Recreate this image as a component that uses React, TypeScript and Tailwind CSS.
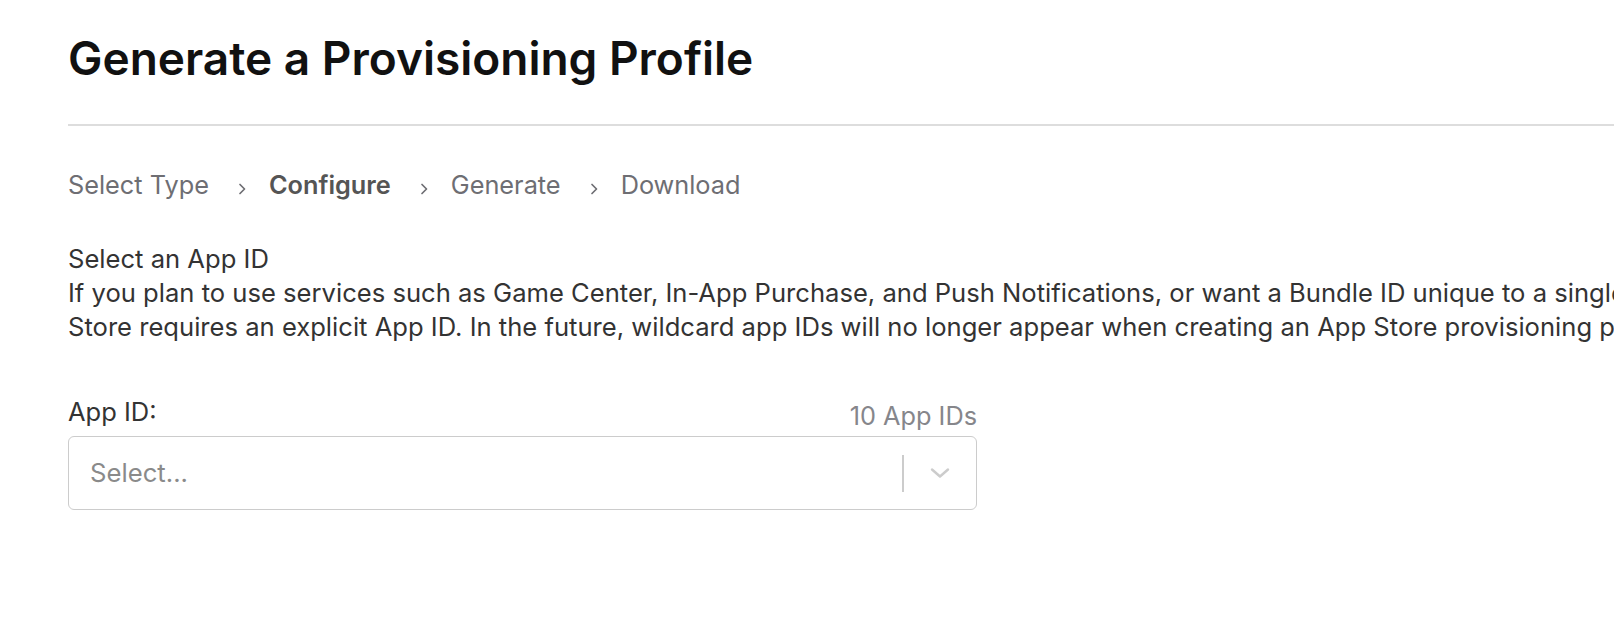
import React from "react";

function Chevron() {
  return (
    <svg width="10" height="14" viewBox="0 0 10 14" className="ml-[28px] mr-[22px] mt-[8px]" fill="none">
      <path d="M3 2.5 L7.5 7 L3 11.5" stroke="#6e6e73" strokeWidth="1.7" strokeLinecap="round" strokeLinejoin="round" />
    </svg>
  );
}

export default function App() {
  return (
    <div className="w-[1614px] h-[624px] overflow-hidden bg-white" style={{ fontFamily: "Inter, 'Noto Sans', sans-serif" }}>
      <div className="pl-[68px] w-[2200px]">
        <h1 className="pt-[28px] text-[46px] leading-[60px] font-semibold text-[#111111]">
          Generate a Provisioning Profile
        </h1>
        <div className="mt-[36px] h-[2px] bg-[#dddddd]" />
        <div className="mt-[44px] flex items-center text-[25.3px] leading-[30px] text-[#6e6e73]">
          <span>Select Type</span>
          <Chevron />
          <span className="font-semibold text-[#555555]">Configure</span>
          <Chevron />
          <span>Generate</span>
          <Chevron />
          <span>Download</span>
        </div>
        <div className="mt-[42px] text-[25.6px] leading-[34px] text-[#333333]">
          <div className="whitespace-nowrap">Select an App ID</div>
          <div className="whitespace-nowrap">
            If you plan to use services such as Game Center, In-App Purchase, and Push Notifications, or want a Bundle ID unique to a single app, use an explicit App ID.
          </div>
          <div className="whitespace-nowrap">
            Store requires an explicit App ID. In the future, wildcard app IDs will no longer appear when creating an App Store provisioning profile.
          </div>
        </div>
        <div className="w-[909px] mt-[53px]">
          <div className="flex items-end justify-between">
            <span className="mb-[4px] text-[25.5px] leading-[30px] text-[#333333]">App ID:</span>
            <span className="text-[25.3px] leading-[30px] text-[#86868b]">10 App IDs</span>
          </div>
          <div className="mt-[5px] h-[74px] rounded-[6px] border border-[#cccccc] flex items-center">
            <span className="flex-1 pl-[21px] text-[25.7px] text-[#8a8a8a]">Select...</span>
            <div className="w-[2px] h-[37px] bg-[#cccccc]" />
            <div className="w-[72px] flex items-center justify-center">
              <svg width="22" height="14" viewBox="0 0 22 14" fill="none">
                <path d="M3 3.5 L11 10.5 L19 3.5" stroke="#cccccc" strokeWidth="2.4" strokeLinecap="round" strokeLinejoin="round" />
              </svg>
            </div>
          </div>
        </div>
      </div>
    </div>
  );
}
